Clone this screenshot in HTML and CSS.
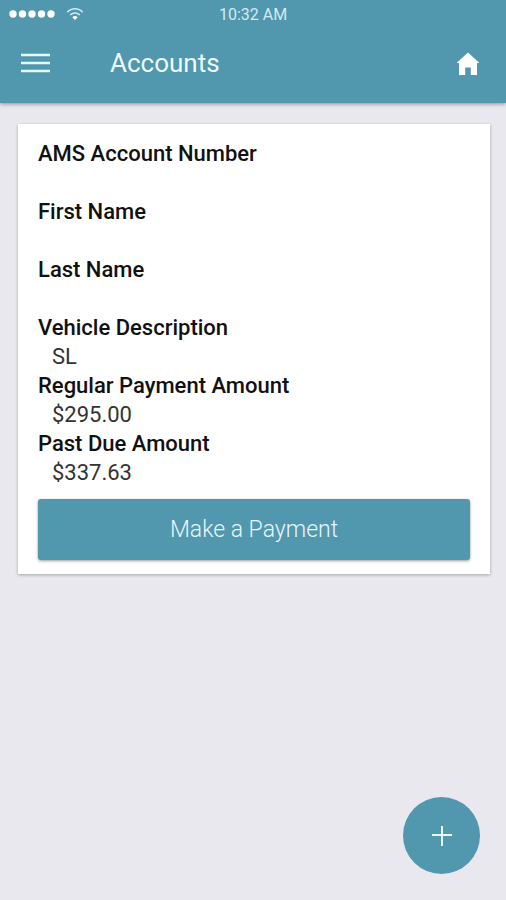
FILE: index.html
```html
<!DOCTYPE html>
<html lang="en">
<head>
<meta charset="utf-8">
<meta name="viewport" content="width=device-width, initial-scale=1">
<title>Accounts</title>
<link rel="stylesheet" href="styles.css">
</head>
<body>
<header class="header">
  <div class="status">
    <div class="signal">
      <svg width="48" height="10" viewBox="0 0 48 10" fill="#fff" aria-hidden="true"><circle cx="5" cy="5" r="3.7"/><circle cx="14.5" cy="5" r="3.7"/><circle cx="24" cy="5" r="3.7"/><circle cx="33.5" cy="5" r="3.7"/><circle cx="43" cy="5" r="3.7"/></svg>
      <svg width="18" height="14" viewBox="0 0 18 14" fill="none" stroke="#d4ebf2" stroke-width="1.5" aria-hidden="true"><path d="M1.3 5.2C5.500.700 12.500.700 16.700 5.200M4.200 8C7 5.200 11 5.200 13.800 8"/><path d="M6.300 10.200C7.900 8.700 10.100 8.700 11.700 10.200L9 13Z" fill="#fff" stroke="none"/></svg>
    </div>
    <time class="clock">10:32 AM</time>
  </div>
  <div class="toolbar">
    <button class="icon-button" type="button" aria-label="Menu">
      <svg width="30" height="22" viewBox="0 0 30 22" stroke="#e6f8fc" stroke-width="2.4" aria-hidden="true"><path d="M1 3H30M1 11H30M1 19H30"/></svg>
    </button>
    <h1 class="title">Accounts</h1>
    <a class="home" href="#" aria-label="Home">
      <svg width="24" height="24" viewBox="0 0 24 24" fill="#fff" aria-hidden="true"><path d="M12 1.500 23.500 12H21V24H14.800V16.500H9.200V24H3V12H.500Z"/></svg>
    </a>
  </div>
</header>
<main class="content">
  <section class="card">
    <dl class="details">
      <dt>AMS Account Number</dt><dd></dd>
      <dt>First Name</dt><dd></dd>
      <dt>Last Name</dt><dd></dd>
      <dt>Vehicle Description</dt><dd>SL</dd>
      <dt>Regular Payment Amount</dt><dd>$295.00</dd>
      <dt>Past Due Amount</dt><dd>$337.63</dd>
    </dl>
    <button class="pay" type="button">Make a Payment</button>
  </section>
</main>
<button class="fab" type="button" aria-label="Add">
  <svg width="20" height="20" viewBox="0 0 20 20" stroke="#e6f8fc" stroke-width="2" aria-hidden="true"><path d="M10 0V20M0 9H20"/></svg>
</button>
</body>
</html>
```
FILE: styles.css
```css
* {
  box-sizing: border-box;
}

body {
  margin: 0;
  min-height: 100vh;
  background: #e9e8ee;
  color: #111;
  font-family: Roboto, "Liberation Sans", sans-serif;
}

svg {
  display: block;
}

button {
  border: 0;
  padding: 0;
  color: #fff;
  font-family: inherit;
}

.header {
  background: #5197ae;
  box-shadow: 0 1px 4px rgba(0, 0, 0, 0.4);
}

.status {
  display: grid;
  grid-template-columns: 1fr auto 1fr;
  align-items: center;
  height: 28px;
  padding: 0 8px;
}

.signal {
  display: flex;
  align-items: center;
  gap: 10px;
}

.clock {
  color: #d4ebf2;
  font-size: 16px;
}

.toolbar {
  display: flex;
  align-items: center;
  height: 75px;
  padding: 0 26px 6px 20px;
}

.icon-button {
  background: none;
}

.title {
  flex: 1;
  margin: 0 0 0 60px;
  color: #eefbff;
  font-size: 26px;
  font-weight: 400;
}

.content {
  padding: 21px 16px 0 18px;
}

.card {
  padding: 15px 20px 14px;
  background: #fff;
  box-shadow: 0 1px 3px rgba(0, 0, 0, 0.3);
}

.details {
  margin: 0 0 12px;
  font-size: 22px;
  line-height: 29px;
}

.details dt {
  font-weight: 500;
}

.details dd {
  min-height: 29px;
  margin: 0 0 0 14px;
  color: #333;
}

.pay {
  display: block;
  width: 100%;
  height: 61px;
  border-radius: 3px;
  background: #5197ae;
  box-shadow: 0 1px 3px rgba(0, 0, 0, 0.4);
  color: #e6f6fb;
  font-size: 23px;
  font-weight: 300;
}

.fab {
  position: fixed;
  right: 26px;
  bottom: 26px;
  display: grid;
  place-items: center;
  width: 77px;
  height: 77px;
  border-radius: 50%;
  background: #5197ae;
}
```
